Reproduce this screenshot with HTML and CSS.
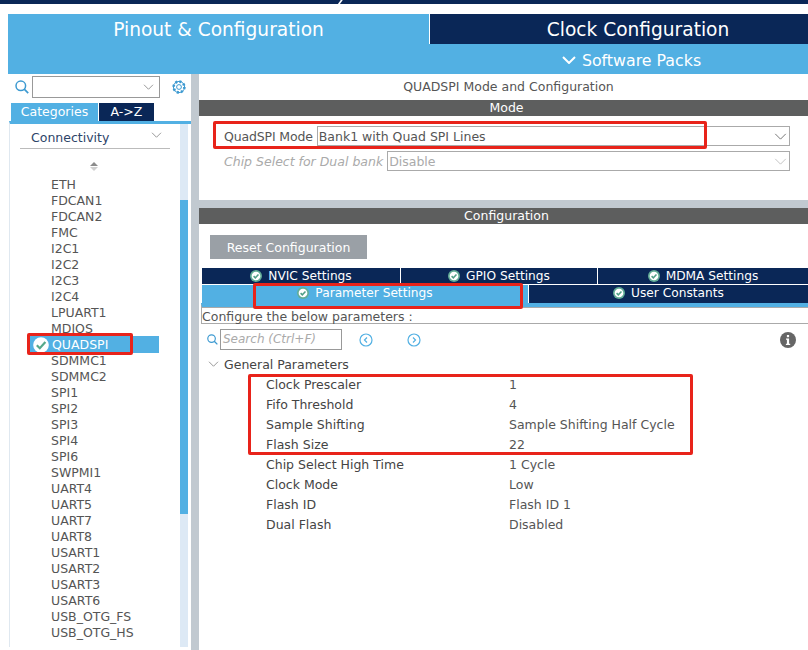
FILE: index.html
```html
<!DOCTYPE html>
<html lang="en">
<head>
    <meta charset="UTF-8">
    <meta name="viewport" content="width=device-width, initial-scale=1.0">
    <title>QUADSPI Mode and Configuration</title>
    <link rel="stylesheet" href="styles.css">
</head>
<body>
    <svg class="defs" width="0" height="0">
        <symbol id="check" viewBox="0 0 16 16">
            <circle cx="8" cy="8" r="8" fill="#62ad97"/>
            <circle cx="8" cy="8" r="5.8" fill="#fff"/>
            <path d="M4.8 8.2l2.3 2.3L11.3 6" fill="none" stroke="#4f9f86" stroke-width="2"/>
        </symbol>
        <symbol id="chev" viewBox="0 0 14 8">
            <path d="M1 1l6 6 6-6" fill="none" stroke="currentColor" stroke-width="1"/>
        </symbol>
        <symbol id="lens" viewBox="0 0 14 14">
            <circle cx="5.8" cy="5.8" r="4.8" fill="none" stroke="#3d9ad1" stroke-width="1.5"/>
            <path d="M9.2 9.2l4 4" stroke="#3d9ad1" stroke-width="1.7"/>
        </symbol>
    </svg>

    <div class="topbar"><span class="topbar-mark"></span></div>

    <div class="header">
        <div class="head-left">Pinout &amp; Configuration</div>
        <div class="head-right">
            <div class="head-clock">Clock Configuration</div>
            <div class="head-packs">
                <svg width="14" height="8" viewBox="0 0 14 8"><path d="M1 1l6 6 6-6" fill="none" stroke="#fff" stroke-width="2"/></svg>
                Software Packs
            </div>
        </div>
    </div>

    <div class="workspace">
        <aside class="sidebar">
            <div class="side-search">
                <svg class="side-lens" width="14" height="14"><use href="#lens"/></svg>
                <div class="combo">
                    <svg class="combo-chev" width="11" height="6"><use href="#chev"/></svg>
                </div>
                <svg class="gear" width="16" height="16" viewBox="0 0 16 16">
                    <circle cx="8" cy="8" r="5.4" fill="none" stroke="#3d9ad1" stroke-width="2.6" stroke-dasharray="2.1 2.1"/>
                    <circle cx="8" cy="8" r="5.6" fill="none" stroke="#3d9ad1" stroke-width="1"/>
                    <circle cx="8" cy="8" r="2.4" fill="none" stroke="#3d9ad1" stroke-width="1"/>
                </svg>
            </div>
            <div class="side-tabs">
                <div class="side-tab active">Categories</div>
                <div class="side-tab">A-&gt;Z</div>
            </div>
            <div class="side-pane">
                <div class="side-content">
                    <div class="cat-head">
                        <span>Connectivity</span>
                        <svg class="cat-chev" width="11" height="6"><use href="#chev"/></svg>
                    </div>
                    <div class="sorter"><i class="sort-up"></i><i class="sort-down"></i></div>
                    <ul class="ip-list">
                        <li>ETH</li>
                        <li>FDCAN1</li>
                        <li>FDCAN2</li>
                        <li>FMC</li>
                        <li>I2C1</li>
                        <li>I2C2</li>
                        <li>I2C3</li>
                        <li>I2C4</li>
                        <li>LPUART1</li>
                        <li>MDIOS</li>
                        <li class="selected">
                            <svg class="ip-check" width="16" height="16" viewBox="0 0 16 16">
                                <circle cx="8" cy="8" r="7.8" fill="#fff"/>
                                <path d="M3.8 8.2l3 3L12.4 5" fill="none" stroke="#56a98a" stroke-width="2.2"/>
                            </svg>
                            QUADSPI
                        </li>
                        <li>SDMMC1</li>
                        <li>SDMMC2</li>
                        <li>SPI1</li>
                        <li>SPI2</li>
                        <li>SPI3</li>
                        <li>SPI4</li>
                        <li>SPI6</li>
                        <li>SWPMI1</li>
                        <li>UART4</li>
                        <li>UART5</li>
                        <li>UART7</li>
                        <li>UART8</li>
                        <li>USART1</li>
                        <li>USART2</li>
                        <li>USART3</li>
                        <li>USART6</li>
                        <li>USB_OTG_FS</li>
                        <li>USB_OTG_HS</li>
                    </ul>
                </div>
                <div class="side-track"><div class="side-thumb"></div></div>
            </div>
        </aside>

        <main class="main">
            <section class="mode-panel">
                <div class="panel-title">QUADSPI Mode and Configuration</div>
                <div class="bar">Mode</div>
                <div class="mode-row first">
                    <span class="mode-label">QuadSPI Mode</span>
                    <div class="mode-select">
                        Bank1 with Quad SPI Lines
                        <svg class="select-chev" width="13" height="7"><use href="#chev"/></svg>
                    </div>
                </div>
                <div class="mode-row disabled">
                    <span class="mode-label">Chip Select for Dual bank</span>
                    <div class="mode-select">
                        Disable
                        <svg class="select-chev" width="13" height="7"><use href="#chev"/></svg>
                    </div>
                </div>
            </section>

            <section class="config-panel">
                <div class="bar">Configuration</div>
                <button class="reset-btn" type="button">Reset Configuration</button>
                <div class="cfg-tabs">
                    <div class="cfg-row top">
                        <div class="cfg-tab t1"><svg width="12" height="12"><use href="#check"/></svg>NVIC Settings</div>
                        <div class="cfg-tab t2"><svg width="12" height="12"><use href="#check"/></svg>GPIO Settings</div>
                        <div class="cfg-tab t3"><svg width="12" height="12"><use href="#check"/></svg>MDMA Settings</div>
                    </div>
                    <div class="cfg-row bottom">
                        <div class="cfg-tab t4 active"><svg width="12" height="12"><use href="#check"/></svg>Parameter Settings</div>
                        <div class="cfg-tab t5"><svg width="12" height="12"><use href="#check"/></svg>User Constants</div>
                    </div>
                </div>
                <div class="cfg-note">Configure the below parameters :</div>
                <div class="search-row">
                    <svg class="search-lens" width="11" height="11"><use href="#lens"/></svg>
                    <div class="search-box">Search (Ctrl+F)</div>
                    <svg class="nav-btn prev" width="14" height="14" viewBox="0 0 14 14">
                        <circle cx="7" cy="7" r="6" fill="none" stroke="#52b0e3" stroke-width="1.2"/>
                        <path d="M8 4.5L5.5 7 8 9.5" fill="none" stroke="#52b0e3" stroke-width="1.2"/>
                    </svg>
                    <svg class="nav-btn next" width="14" height="14" viewBox="0 0 14 14">
                        <circle cx="7" cy="7" r="6" fill="none" stroke="#52b0e3" stroke-width="1.2"/>
                        <path d="M6 4.5L8.5 7 6 9.5" fill="none" stroke="#52b0e3" stroke-width="1.2"/>
                    </svg>
                    <svg class="info" width="16" height="16" viewBox="0 0 16 16">
                        <circle cx="8" cy="8" r="8" fill="#666"/>
                        <rect x="6.9" y="3" width="2.2" height="2.2" fill="#fff"/>
                        <path d="M6 6.6h3.1v5.2H10.2v1.2H5.9v-1.2H6.9V7.8H6z" fill="#fff"/>
                    </svg>
                </div>
                <div class="group-head">
                    <svg class="group-chev" width="11" height="6"><use href="#chev"/></svg>
                    General Parameters
                </div>
                <div class="param-row"><span class="param-name">Clock Prescaler</span><span>1</span></div>
                <div class="param-row"><span class="param-name">Fifo Threshold</span><span>4</span></div>
                <div class="param-row"><span class="param-name">Sample Shifting</span><span>Sample Shifting Half Cycle</span></div>
                <div class="param-row"><span class="param-name">Flash Size</span><span>22</span></div>
                <div class="param-row"><span class="param-name">Chip Select High Time</span><span>1 Cycle</span></div>
                <div class="param-row"><span class="param-name">Clock Mode</span><span>Low</span></div>
                <div class="param-row"><span class="param-name">Flash ID</span><span>Flash ID 1</span></div>
                <div class="param-row"><span class="param-name">Dual Flash</span><span>Disabled</span></div>
            </section>
        </main>
    </div>

    <!-- red annotation boxes drawn on top of the screenshot -->
    <div class="mark mark-mode"></div>
    <div class="mark mark-tab"></div>
    <div class="mark mark-ip"></div>
    <div class="mark mark-params"></div>
</body>
</html>
```

FILE: styles.css
```css
* { box-sizing: border-box; }
body { margin: 0; width: 808px; height: 650px; overflow: hidden; position: relative; background: #fff; font-family: "DejaVu Sans", sans-serif; font-size: 12.5px; color: #555; }
.defs { position: absolute; }

.topbar { height: 4px; background: #0a2757; margin-bottom: 10px; position: relative; }
.topbar-mark { position: absolute; left: 339px; top: 0; width: 2px; height: 5px; background: #fff; transform: skewX(-35deg); }

.header { display: flex; height: 60px; margin-left: 8px; background: #52b0e3; color: #fff; }
.head-left { width: 421px; height: 30px; line-height: 32px; text-align: center; font-size: 18.6px; }
.head-right { flex: 1; }
.head-clock { height: 30px; line-height: 32px; padding-left: 38px; text-align: center; font-size: 18.6px; background: #0a2757; border-left: 1px solid #fff; }
.head-packs { height: 30px; display: flex; align-items: center; justify-content: center; gap: 6px; padding: 2px 0 0 26px; font-size: 15.8px; }

.workspace { display: flex; height: 576px; }

.sidebar { width: 191px; padding-left: 9px; flex: none; }
.side-search { display: flex; align-items: center; height: 22px; margin-top: 2px; padding-left: 6px; }
.side-lens { margin-right: 3px; }
.combo { width: 128px; height: 22px; border: 1px solid #999; display: flex; align-items: center; justify-content: flex-end; padding-right: 5px; color: #777; }
.gear { margin-left: 11px; }
.side-tabs { display: flex; margin: 5px 0 0 2px; height: 18px; gap: 1px; }
.side-tab { width: 55px; background: #0a2757; color: #fff; text-align: center; line-height: 18px; }
.side-tab.active { width: 87px; background: #52b0e3; }
.side-pane { display: flex; border-top: 3px solid #52b0e3; border-left: 1px solid #dfe8f0; height: 526px; }
.side-content { width: 170px; flex: none; padding-left: 10px; }
.cat-head { display: flex; height: 25px; margin-right: 10px; padding: 6px 0 0 11px; justify-content: space-between; border-bottom: 1px solid #bbb; color: #2d4468; }
.cat-chev { margin: 2px 8px 0 0; color: #777; }
.sorter { height: 28px; padding-top: 13px; margin-left: 70px; }
.sorter i { display: block; width: 0; height: 0; margin-bottom: 1px; border-left: 4px solid transparent; border-right: 4px solid transparent; }
.sort-up { border-bottom: 4px solid #8c8c8c; }
.sort-down { border-top: 4px solid #cfcfcf; }
.ip-list { list-style: none; margin: 0; padding: 0; }
.ip-list li { height: 16px; line-height: 16px; padding-left: 31px; white-space: nowrap; }
.ip-list .selected { display: flex; align-items: center; gap: 3px; height: 17px; margin: -1px 21px 0 10px; padding-left: 3px; background: #52b0e3; color: #fff; }
.ip-check { flex: none; }
.side-track { width: 8px; background: #dde9f5; position: relative; }
.side-thumb { position: absolute; left: 0; right: 0; top: 76px; height: 314px; background: #52b0e3; }

.main { flex: 1; display: flex; flex-direction: column; border-left: 8px solid #c1c9d0; }
.mode-panel { height: 126px; }
.panel-title { height: 26px; line-height: 26px; padding-left: 10px; text-align: center; }
.bar { height: 16px; line-height: 16px; padding-left: 6px; text-align: center; background: #5d5e5e; color: #fff; }
.mode-row { display: flex; align-items: center; height: 20px; margin: 5px 18px 0 25px; gap: 4px; }
.mode-row.first { margin-top: 10px; }
.mode-row.first .mode-label { letter-spacing: -.15px; }
.mode-label { white-space: nowrap; }
.mode-select { flex: 1; height: 20px; line-height: 19px; padding-left: 1px; border: 1px solid #aaa; position: relative; }
.select-chev { position: absolute; right: 2px; top: 6px; color: #666; }
.disabled { color: #aaa; }
.disabled .mode-label { font-style: italic; }
.disabled .select-chev { color: #bbb; }

.config-panel { flex: 1; border-top: 8px solid #c1c9d0; }
.reset-btn { display: block; width: 157px; height: 24px; margin: 11px 0 9px 11px; padding: 0; border: 0; background: #9aa0a6; color: #fff; font: inherit; }
.cfg-tabs { margin-left: 3px; font-size: 12.2px; }
.cfg-row { display: flex; gap: 1px; }
.cfg-row.top { height: 17px; }
.cfg-row.bottom { height: 18px; }
.cfg-tab { display: flex; align-items: center; justify-content: center; gap: 6px; background: #0a2757; color: #fff; }
.cfg-tab.active { background: #52b0e3; }
.t1 { width: 198px; height: 16px; }
.t2 { width: 196px; height: 16px; }
.t3 { flex: 1; height: 16px; }
.t4 { width: 326px; padding-bottom: 2px; }
.t5 { flex: 1; padding-bottom: 2px; }
.cfg-note { height: 21px; margin: 0 0 0 2px; padding: 2px 0 0; border-left: 1px solid #aaa; border-bottom: 1px solid #aaa; border-top: 4px solid #52b0e3; box-shadow: inset 0 1px 0 #aaa; line-height: 15px; }
.search-row { display: flex; align-items: center; height: 21px; margin-top: 5px; padding-left: 8px; }
.search-lens { margin-right: 2px; }
.search-box { width: 122px; height: 21px; line-height: 19px; padding-left: 2px; border: 1px solid #999; font-size: 12px; font-style: italic; color: #aaa; }
.nav-btn.prev { margin-left: 17px; }
.nav-btn.next { margin-left: 34px; }
.info { margin-left: auto; margin-right: 12px; }
.group-head { display: flex; align-items: center; gap: 5px; height: 20px; margin: 4px 0 1px; padding-left: 9px; color: #444; }
.group-chev { color: #777; }
.param-row { display: flex; height: 20px; line-height: 20px; padding-left: 67px; }
.param-name { width: 243px; color: #444; }

.mark { position: absolute; border: 3px solid #e8231a; border-radius: 2px; }
.mark-mode { left: 213px; top: 121px; width: 494px; height: 28px; }
.mark-tab { left: 253px; top: 283px; width: 270px; height: 26px; }
.mark-ip { left: 27px; top: 333px; width: 106px; height: 22px; }
.mark-params { left: 248px; top: 374px; width: 445px; height: 81px; }
```
